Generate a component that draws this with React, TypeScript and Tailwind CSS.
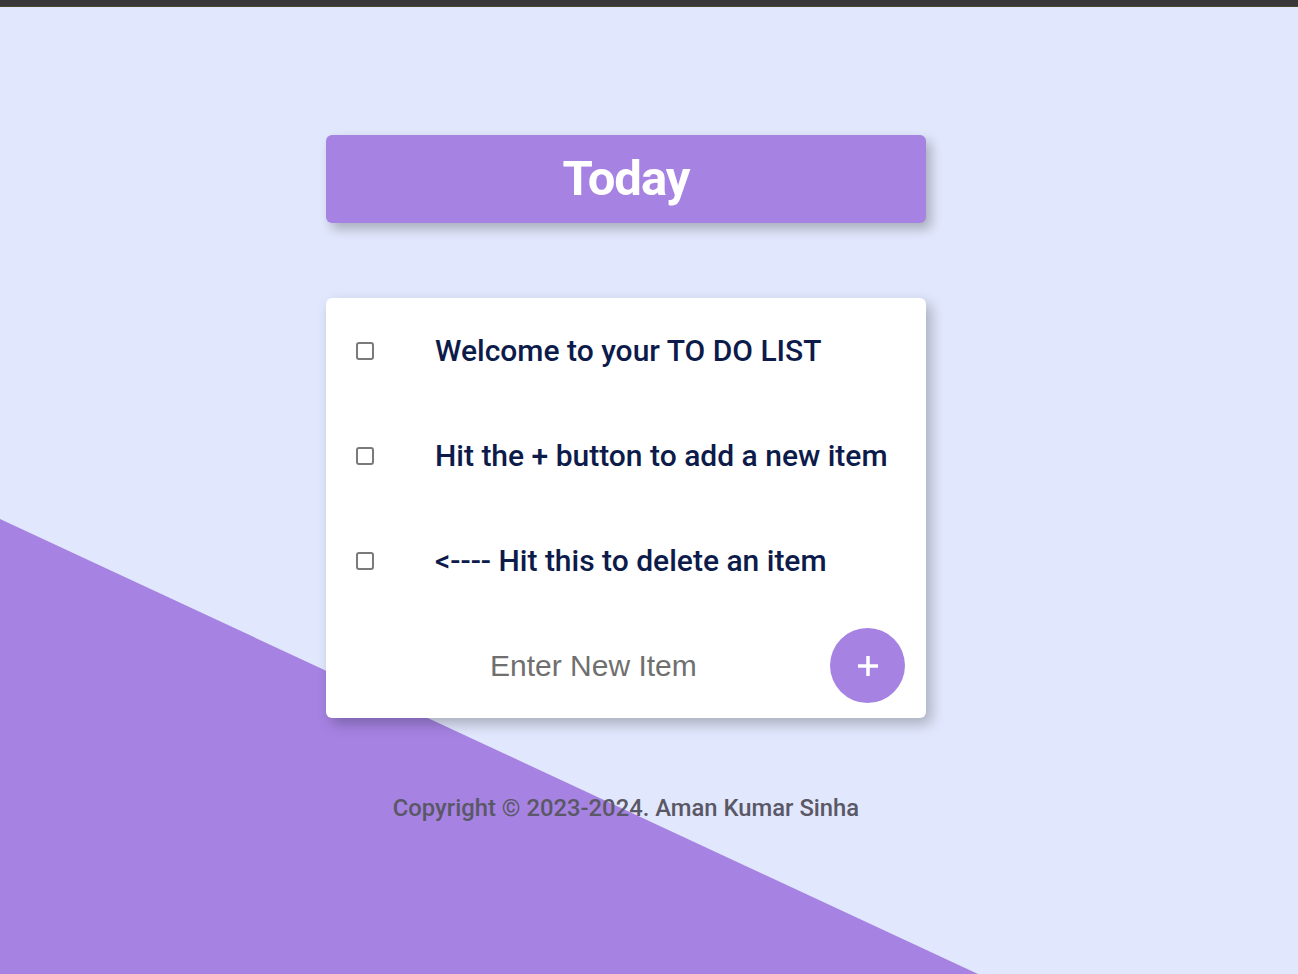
import { useState } from "react";

const items = [
  "Welcome to your TO DO LIST",
  "Hit the + button to add a new item",
  "<---- Hit this to delete an item",
];

export default function App() {
  const [text, setText] = useState("");

  return (
    <div className="relative min-h-screen overflow-hidden bg-[#e1e7fc] font-['Roboto',sans-serif]">
      <div className="h-[7px] bg-[#383838] border-b border-[#4a4636]" />

      {/* purple wedge behind everything */}
      <div className="absolute inset-0 bg-[#a683e3] [clip-path:polygon(0_519px,978px_974px,0_974px)]" />

      <div className="relative flex flex-col items-center pt-[128px] pr-[46px]">
        <div className="w-[600px] h-[88px] rounded-[6px] bg-[#a683e3] shadow-[5px_6px_12px_rgba(0,0,0,0.25)] flex items-center justify-center">
          <h1 className="text-[49px] font-bold text-white tracking-[-1px]">Today</h1>
        </div>

        <div className="mt-[75px] w-[600px] rounded-[6px] bg-white shadow-[5px_6px_14px_rgba(0,0,0,0.25)]">
          {items.map((item) => (
            <div key={item} className="h-[105px] flex items-center">
              <input
                type="checkbox"
                className="ml-[30px] w-[18px] h-[18px] appearance-none rounded-[3px] border-2 border-[#7a7a7a] bg-white"
              />
              <p className="ml-[61px] text-[30px] font-medium text-[#0d1b4b]">{item}</p>
            </div>
          ))}

          <div className="h-[105px] flex items-center">
            <input
              type="text"
              value={text}
              onChange={(e) => setText(e.target.value)}
              placeholder="Enter New Item"
              className="ml-[164px] w-[320px] bg-transparent outline-none text-[30px] font-['Liberation_Sans',sans-serif] text-[#333] placeholder-[#6f6f6f]"
            />
            <button className="ml-auto mr-[21px] w-[75px] h-[75px] rounded-full bg-[#a683e3] flex items-center justify-center">
              <svg width="24" height="24" viewBox="0 0 24 24">
                <path d="M12 2v20M2 12h20" stroke="white" strokeWidth="3.5" />
              </svg>
            </button>
          </div>
        </div>

        <p className="mt-[73px] text-[23.8px] font-medium text-[#5a5866]">
          Copyright © 2023-2024. Aman Kumar Sinha
        </p>
      </div>
    </div>
  );
}
